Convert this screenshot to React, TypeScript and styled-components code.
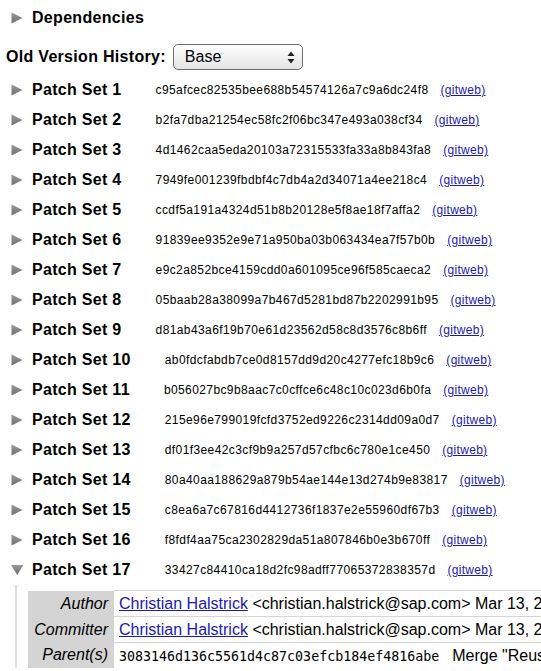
import React from "react";
import styled, { createGlobalStyle } from "styled-components";

const Global = createGlobalStyle`
  html, body { margin: 0; padding: 0; background: #fff; overflow: hidden; }
  body { font-family: "Liberation Sans", Arial, Helvetica, sans-serif; color: #000; }
`;

const Page = styled.div`
  padding: 3px 0 0 6px;
  display: flex;
  flex-direction: column;
`;

const Header = styled.div`
  display: flex;
  align-items: center;
  height: 30px;
  padding-left: 5px;
  white-space: nowrap;
`;

const Arrow = styled.svg`
  flex: none;
  display: block;
`;

const HeaderTitle = styled.span`
  font-weight: bold;
  font-size: 16px;
  letter-spacing: 0.3px;
  margin-left: 9px;
`;

const HistoryRow = styled.div`
  display: flex;
  align-items: center;
  margin-top: 11px;
  height: 26px;
  margin-bottom: 5px;
`;

const HistoryLabel = styled.span`
  font-weight: bold;
  font-size: 16px;
  letter-spacing: 0.3px;
`;

const Select = styled.div`
  margin-left: 7px;
  width: 130px;
  height: 26px;
  box-sizing: border-box;
  border: 1px solid #6f6f6f;
  border-radius: 5px;
  background: linear-gradient(#ffffff, #f2f2f2 50%, #e4e4e4);
  display: flex;
  align-items: center;
  justify-content: space-between;
  padding: 0 7px 0 11px;
  font-size: 16px;
`;

const Revision = styled.span`
  font-size: 12px;
  letter-spacing: 0.4px;
  margin-left: 34px;
`;

const GitwebLink = styled.a`
  font-size: 12px;
  letter-spacing: 0.3px;
  margin-left: 12px;
  color: #1a1ab8;
  text-decoration: underline;
`;

const Expanded = styled.div`
  margin-left: 9px;
  border-left: 2px solid #dedede;
  padding: 5px 0 0 11px;
`;

const InfoTable = styled.table`
  border-collapse: collapse;
  white-space: nowrap;
  width: max-content;
`;

const LabelCell = styled.td`
  box-sizing: border-box;
  background: #d4d4d4;
  width: 86px;
  min-width: 86px;
  text-align: right;
  font-style: italic;
  font-size: 16px;
  padding: 0 6px 0 0;
  height: 25px;
`;

const ValueCell = styled.td`
  border-top: 1px solid #d6d6d6;
  font-size: 16px;
  padding: 0 0 0 5px;
  height: 25px;
`;

const PersonLink = styled.a`
  color: #1a1ab8;
  text-decoration: underline;
`;

const Mono = styled.span`
  font-family: "DejaVu Sans Mono", "Liberation Mono", monospace;
  font-size: 13.3px;
`;

const Subject = styled.span`
  margin-left: 13px;
`;

const RightArrow = () => (
  <Arrow width="12" height="13" viewBox="0 0 12 13">
    <defs>
      <linearGradient id="ga" x1="0" y1="0" x2="0" y2="1">
        <stop offset="0" stopColor="#9a9a9a" />
        <stop offset="1" stopColor="#707070" />
      </linearGradient>
    </defs>
    <path d="M0.5 0.5 L11.5 6 L0.5 11.5 Z" fill="url(#ga)" />
  </Arrow>
);

const DownArrow = () => (
  <Arrow width="12" height="13" viewBox="0 0 12 13">
    <defs>
      <linearGradient id="gb" x1="0" y1="0" x2="0" y2="1">
        <stop offset="0" stopColor="#9a9a9a" />
        <stop offset="1" stopColor="#707070" />
      </linearGradient>
    </defs>
    <path d="M0 1 L12.5 1 L6.25 11 Z" fill="url(#gb)" />
  </Arrow>
);

const SelectArrows = () => (
  <svg width="8" height="13" viewBox="0 0 8 13">
    <path d="M4 0.5 L7.5 5 L0.5 5 Z" fill="#222" />
    <path d="M4 12.5 L7.5 8 L0.5 8 Z" fill="#222" />
  </svg>
);

const revisions = [
  "c95afcec82535bee688b54574126a7c9a6dc24f8",
  "b2fa7dba21254ec58fc2f06bc347e493a038cf34",
  "4d1462caa5eda20103a72315533fa33a8b843fa8",
  "7949fe001239fbdbf4c7db4a2d34071a4ee218c4",
  "ccdf5a191a4324d51b8b20128e5f8ae18f7affa2",
  "91839ee9352e9e71a950ba03b063434ea7f57b0b",
  "e9c2a852bce4159cdd0a601095ce96f585caeca2",
  "05baab28a38099a7b467d5281bd87b2202991b95",
  "d81ab43a6f19b70e61d23562d58c8d3576c8b6ff",
  "ab0fdcfabdb7ce0d8157dd9d20c4277efc18b9c6",
  "b056027bc9b8aac7c0cffce6c48c10c023d6b0fa",
  "215e96e799019fcfd3752ed9226c2314dd09a0d7",
  "df01f3ee42c3cf9b9a257d57cfbc6c780e1ce450",
  "80a40aa188629a879b54ae144e13d274b9e83817",
  "c8ea6a7c67816d4412736f1837e2e55960df67b3",
  "f8fdf4aa75ca2302829da51a807846b0e3b670ff",
  "33427c84410ca18d2fc98adff77065372838357d",
];

export default function App() {
  const last = revisions.length - 1;
  return (
    <>
      <Global />
      <Page>
        <Header>
          <RightArrow />
          <HeaderTitle>Dependencies</HeaderTitle>
        </Header>
        <HistoryRow>
          <HistoryLabel>Old Version History:</HistoryLabel>
          <Select>
            <span>Base</span>
            <SelectArrows />
          </Select>
        </HistoryRow>
        {revisions.map((rev, i) => (
          <React.Fragment key={rev}>
            <Header>
              {i === last ? <DownArrow /> : <RightArrow />}
              <HeaderTitle>Patch Set {i + 1}</HeaderTitle>
              <Revision>{rev}</Revision>
              <GitwebLink href="#">(gitweb)</GitwebLink>
            </Header>
            {i === last && (
              <Expanded>
                <InfoTable>
                  <tbody>
                    <tr>
                      <LabelCell>Author</LabelCell>
                      <ValueCell>
                        <PersonLink href="#">Christian Halstrick</PersonLink>{" "}
                        &lt;christian.halstrick@sap.com&gt; Mar 13, 2012 4:37 PM
                      </ValueCell>
                    </tr>
                    <tr>
                      <LabelCell>Committer</LabelCell>
                      <ValueCell>
                        <PersonLink href="#">Christian Halstrick</PersonLink>{" "}
                        &lt;christian.halstrick@sap.com&gt; Mar 13, 2012 4:37 PM
                      </ValueCell>
                    </tr>
                    <tr>
                      <LabelCell>Parent(s)</LabelCell>
                      <ValueCell>
                        <Mono>3083146d136c5561d4c87c03efcb184ef4816abe</Mono>
                        <Subject>Merge "Reuse the index"</Subject>
                      </ValueCell>
                    </tr>
                  </tbody>
                </InfoTable>
              </Expanded>
            )}
          </React.Fragment>
        ))}
      </Page>
    </>
  );
}
